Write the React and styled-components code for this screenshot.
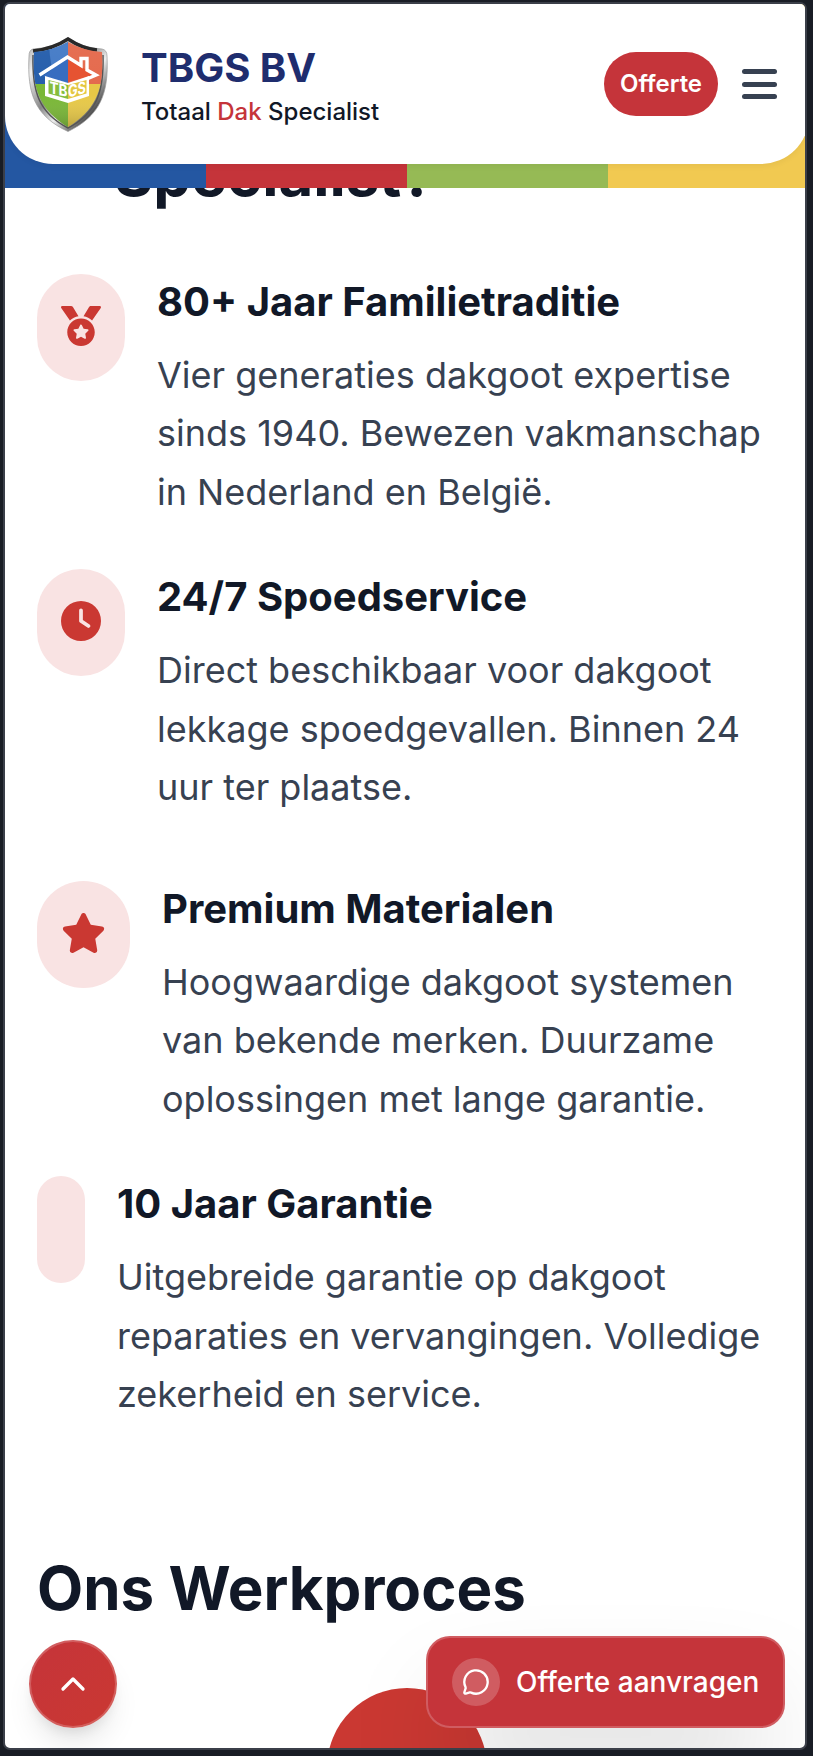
import React from "react";
import styled, { createGlobalStyle } from "styled-components";
import { FaMedal } from "react-icons/fa";
import { FaClock, FaStar } from "react-icons/fa6";
import { ChevronUp, MessageCircle } from "lucide-react";

const GlobalStyle = createGlobalStyle`
  * { box-sizing: border-box; }
  body { margin: 0; background: #191d25; font-family: Inter, "Liberation Sans", sans-serif; }
  h1, h2, h3, p { margin: 0; }
  button { font-family: inherit; border: 0; }
`;

const Frame = styled.div`
  height: 1756px;
  padding: 2px 6px 6px 3px;
  background: #191d25;
`;

const Screen = styled.main`
  position: relative;
  height: 1748px;
  overflow: hidden;
  background: #fff;
  border: 2px solid #3b3f49;
  border-radius: 7px;
`;

const HeaderWrap = styled.header`
  position: absolute;
  z-index: 2;
  top: 0;
  left: 0;
  width: 804px;
  height: 184px;
  display: grid;
  grid-template-columns: repeat(4, 1fr);
`;

const Stripe = styled.span`
  background: ${(p) => p.$color};
`;

const Bar = styled.div`
  position: absolute;
  top: 0;
  left: 0;
  width: 100%;
  height: 160px;
  display: flex;
  align-items: center;
  padding: 0 24px 0 22px;
  background: #fff;
  border-radius: 0 0 48px 48px;
  box-shadow: 0 2px 6px rgba(0, 0, 0, 0.05);
`;

const Brand = styled.div`
  flex: 1;
  display: flex;
  align-items: center;
  gap: 33px;
  padding-top: 2px;
`;

const BrandName = styled.div`
  font-size: 40px;
  font-weight: 700;
  line-height: 50px;
  color: #1f2d6e;
`;

const Tagline = styled.div`
  font-size: 24px;
  font-weight: 500;
  line-height: 32px;
  padding-top: 3px;
  color: #111827;
  em { font-style: normal; color: #c5343a; }
`;

const QuoteButton = styled.button`
  width: 114px;
  height: 64px;
  padding: 0 0 1px;
  border-radius: 32px;
  background: #c5343a;
  color: #fff;
  font-size: 24px;
  font-weight: 600;
`;

const MenuButton = styled.button`
  display: flex;
  flex-direction: column;
  gap: 7.5px;
  width: 35px;
  margin: 0 8px 0 24px;
  padding: 0;
  background: none;
  span { height: 5px; border-radius: 3px; background: #374151; }
`;

const Content = styled.div`
  padding: 133px 40px 0 32px;
`;

const Title = styled.h2`
  font-size: 60px;
  font-weight: 700;
  line-height: 75px;
  color: #111827;
  padding-left: ${(p) => p.$indent || 0}px;
`;

const Features = styled.section`
  display: flex;
  flex-direction: column;
  gap: 64px;
  padding: 61.75px 0 127.25px;
`;

const Group = styled.div`
  display: flex;
  flex-direction: column;
  gap: 48px;
`;

const Feature = styled.article`
  display: flex;
  align-items: flex-start;
  gap: 32px;
`;

const IconPill = styled.div`
  flex: none;
  height: 107px;
  padding: 32px 24px;
  border-radius: 48px;
  background: #f9e3e3;
  color: #ca3832;
  svg { display: block; height: 40px; width: ${(p) => p.$iconWidth}px; }
`;

const FeatureTitle = styled.h3`
  font-size: 40px;
  font-weight: 700;
  line-height: 56px;
  margin-bottom: 16px;
  color: #111827;
  white-space: nowrap;
`;

const FeatureText = styled.p`
  font-size: 36px;
  line-height: 58.5px;
  color: #374151;
  white-space: pre;
`;

const StepCircle = styled.div`
  width: 160px;
  height: 160px;
  margin: 62px 0 0 290px;
  border-radius: 50%;
  background: #ca3832;
`;

const Floating = styled.div`
  position: absolute;
  z-index: 1;
  left: 24px;
  right: 20px;
  bottom: 20px;
  display: flex;
  align-items: flex-end;
  justify-content: space-between;
`;

const TopButton = styled.button`
  display: grid;
  place-items: center;
  width: 88px;
  height: 88px;
  padding: 0;
  border-radius: 50%;
  border: 2px solid rgba(255, 255, 255, 0.2);
  background: linear-gradient(135deg, #c5343a, #ca3832) border-box;
  color: #fff;
  box-shadow: 0 20px 30px -6px rgba(0, 0, 0, 0.1), 0 8px 12px -4px rgba(0, 0, 0, 0.08);
`;

const RequestButton = styled.button`
  display: flex;
  align-items: center;
  gap: 16px;
  width: 359px;
  height: 92px;
  padding: 0 0 0 24px;
  border-radius: 24px;
  border: 2px solid rgba(255, 255, 255, 0.2);
  background: #c5343a border-box;
  color: #fff;
  font-size: 28px;
  font-weight: 500;
  white-space: nowrap;
  box-shadow: 0 50px 100px -24px rgba(0, 0, 0, 0.25);
`;

const Bubble = styled.span`
  display: grid;
  place-items: center;
  width: 48px;
  height: 48px;
  border-radius: 50%;
  background: rgba(255, 255, 255, 0.2);
`;

const Shield = () => (
  <svg width="81" height="96" viewBox="0 0 81 96">
    <defs>
      <linearGradient id="rim" x1="0" y1="0" x2="1" y2="1">
        <stop offset="0" stopColor="#aaa" />
        <stop offset=".2" stopColor="#eee" />
        <stop offset=".45" stopColor="#888" />
        <stop offset=".6" stopColor="#eee" />
        <stop offset=".8" stopColor="#555" />
        <stop offset="1" stopColor="#aaa" />
      </linearGradient>
      <linearGradient id="shade" x1="0" y1="0" x2="0" y2="1">
        <stop offset="0" stopColor="#fff" stopOpacity=".05" />
        <stop offset=".6" stopColor="#fff" stopOpacity="0" />
        <stop offset="1" stopColor="#000" stopOpacity=".25" />
      </linearGradient>
      <clipPath id="face">
        <path d="M41 5 Q57 14 75 15 C77 50 71 72 41 90 C11 72 5 50 7 15 Q25 14 41 5Z" />
      </clipPath>
    </defs>
    <path d="M41 1 Q56 11 75 12 Q80 13 80 19 C82 57 73 79 41 94.500 C8 79 0 57 2 19 Q2 13 6 12 Q26 11 41 1Z" fill="url(#rim)" stroke="#999" strokeWidth=".7" />
    <path d="M6 14 Q26 12 41 2 Q56 12 70 13" fill="none" stroke="#292929" strokeWidth="3.500" />
    <path d="M6 18 C5 55 12 76 41 91 C70 76 77 55 76 18" fill="none" stroke="#555" strokeWidth="1.500" />
    <g clipPath="url(#face)">
      <path fill="#245dab" d="M0 0H41V47H0z" />
      <path fill="#4d84cf" d="M22 0H41V47H30Q22 30 22 0z" opacity=".75" />
      <path fill="#e4694c" d="M41 0H81V47H41z" />
      <path fill="#79b735" d="M0 47H41V96H0z" />
      <path fill="#e7c846" d="M41 47H81V96H41z" />
      <path fill="url(#shade)" d="M0 0H81V96H0z" />
    </g>
    <path fill="#376dc0" d="M16 39 41 21V45L18 40z" />
    <path fill="#e65332" d="M41 21 67 38 41 45z" />
    <path d="M12.500 38 40.500 20 54 28.500V21.500H60V33L69 38 61 41.500" fill="none" stroke="#fff" strokeWidth="3.400" />
    <path d="M18 39 41 46 62 39V59L41 66 18 59Z" fill="#fff" />
    <path d="M21.500 43 41 48V62L21.500 56.500Z" fill="#86bd3c" />
    <path d="M41 48 59.500 43V56.500L41 62Z" fill="#e4c641" />
    <g fill="#fff" fontFamily="Inter, sans-serif" fontWeight="700" fontSize="16.5">
      <text transform="matrix(1 .22 0 1 22.500 56)" textLength="18" lengthAdjust="spacingAndGlyphs">TB</text>
      <text transform="matrix(1 -.25 0 1 41 60.500)" textLength="18" lengthAdjust="spacingAndGlyphs">GS</text>
    </g>
  </svg>
);

const stripes = ["#2457a2", "#c5343a", "#96ba55", "#f1c951"];

const groups = [
  [
    { Icon: FaMedal, title: "80+ Jaar Familietraditie", text: "Vier generaties dakgoot expertise\nsinds 1940. Bewezen vakmanschap\nin Nederland en België." },
    { Icon: FaClock, title: "24/7 Spoedservice", text: "Direct beschikbaar voor dakgoot\nlekkage spoedgevallen. Binnen 24\nuur ter plaatse." },
  ],
  [
    { Icon: FaStar, iconWidth: 45, title: "Premium Materialen", text: "Hoogwaardige dakgoot systemen\nvan bekende merken. Duurzame\noplossingen met lange garantie." },
    { title: "10 Jaar Garantie", text: "Uitgebreide garantie op dakgoot\nreparaties en vervangingen. Volledige\nzekerheid en service." },
  ],
];

export default function App() {
  return (
    <Frame>
      <GlobalStyle />
      <Screen>
        <HeaderWrap>
          {stripes.map((c) => <Stripe key={c} $color={c} />)}
          <Bar>
            <Brand>
              <Shield />
              <div>
                <BrandName>TBGS BV</BrandName>
                <Tagline>Totaal <em>Dak</em> Specialist</Tagline>
              </div>
            </Brand>
            <QuoteButton>Offerte</QuoteButton>
            <MenuButton aria-label="Menu"><span /><span /><span /></MenuButton>
          </Bar>
        </HeaderWrap>
        <Content>
          <Title $indent={77}>Specialist?</Title>
          <Features>
            {groups.map((items, i) => (
              <Group key={i}>
                {items.map(({ Icon, iconWidth = 40, title, text }) => (
                  <Feature key={title}>
                    <IconPill $iconWidth={iconWidth}>{Icon && <Icon />}</IconPill>
                    <div>
                      <FeatureTitle>{title}</FeatureTitle>
                      <FeatureText>{text}</FeatureText>
                    </div>
                  </Feature>
                ))}
              </Group>
            ))}
          </Features>
          <Title>Ons Werkproces</Title>
          <StepCircle />
        </Content>
        <Floating>
          <TopButton aria-label="Naar boven"><ChevronUp size={40} strokeWidth={2} /></TopButton>
          <RequestButton>
            <Bubble><MessageCircle size={28} strokeWidth={2} /></Bubble>
            Offerte aanvragen
          </RequestButton>
        </Floating>
      </Screen>
    </Frame>
  );
}
